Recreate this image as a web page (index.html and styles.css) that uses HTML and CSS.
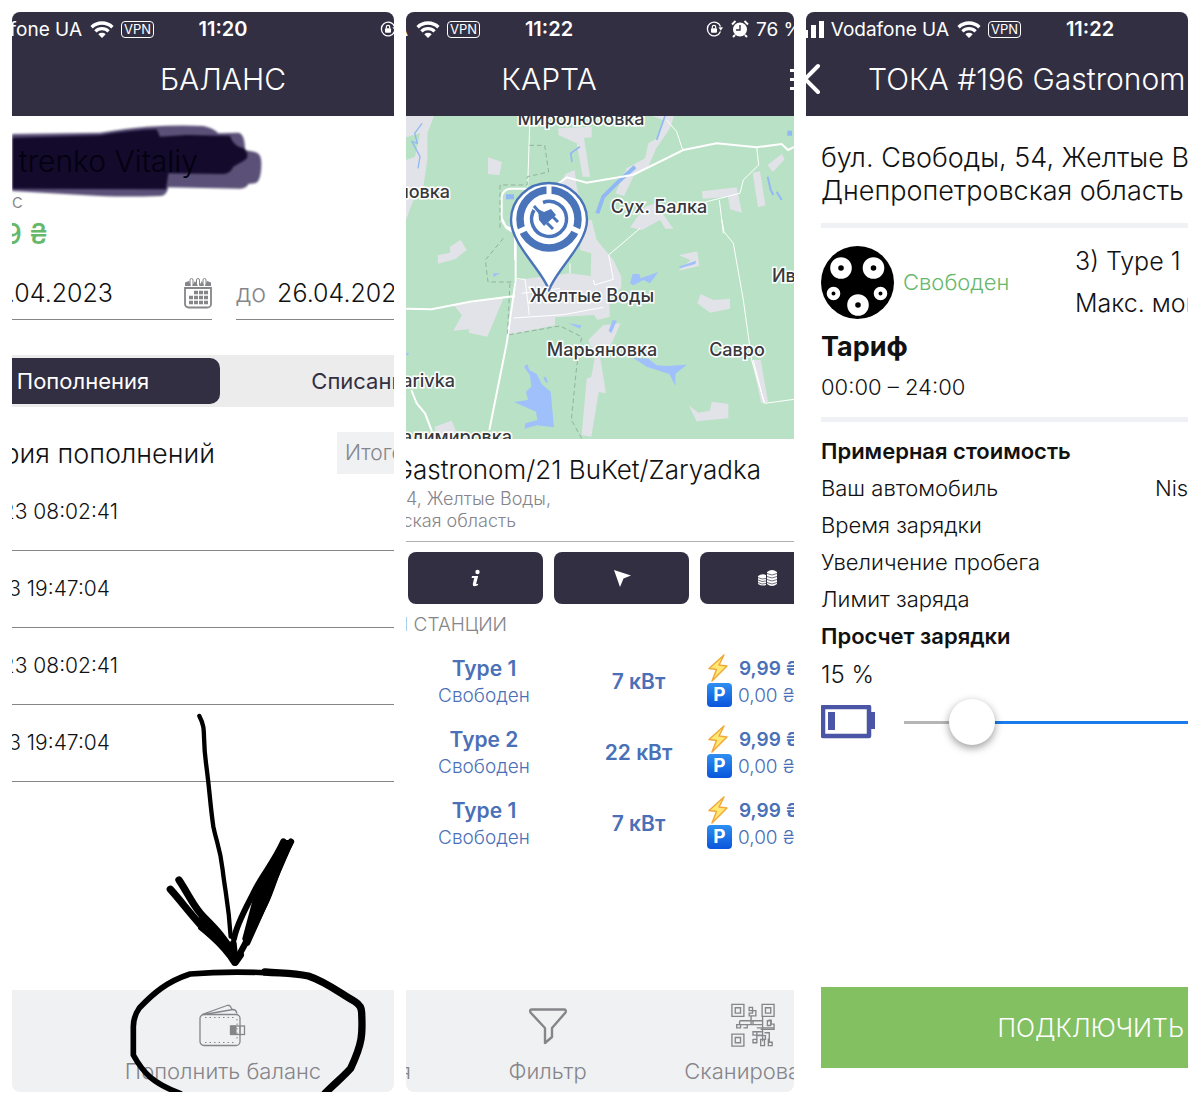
FILE: index.html
```html
<!DOCTYPE html>
<html lang="ru">
<head>
<meta charset="utf-8">
<meta name="viewport" content="width=device-width, initial-scale=1">
<title>TOKA</title>
<link rel="stylesheet" href="styles.css">
</head>
<body>
<svg class="defs" aria-hidden="true">
  <symbol id="wifi" viewBox="0 0 24 17">
    <path d="M1.600 6.200A15 15 0 0 1 22.400 6.200" fill="none" stroke="currentColor" stroke-width="3.400"/>
    <path d="M5.400 10.300A9.500 9.500 0 0 1 18.600 10.300" fill="none" stroke="currentColor" stroke-width="3.200"/>
    <path d="M12 17L8.300 13.300A5.400 5.400 0 0 1 15.700 13.300Z" fill="currentColor"/>
  </symbol>
  <symbol id="lock" viewBox="0 0 17 16">
    <path d="M14.500 5.500A6.800 6.800 0 1 0 14.500 10.500" fill="none" stroke="currentColor" stroke-width="1.300"/>
    <path d="M12.500 6.200h4.500l-2.200 3.600z" fill="currentColor"/>
    <rect x="5" y="7.200" width="6" height="4.600" rx="1" fill="currentColor"/>
    <path d="M6.300 7.500V6a1.700 1.700 0 0 1 3.400 0v1.500" fill="none" stroke="currentColor" stroke-width="1.200"/>
  </symbol>
  <symbol id="bolt" viewBox="0 0 22 28">
    <path d="M17 1L2 14.500l7.500 1L5 27 20 12l-8-1z" fill="#ffe873" stroke="#f2a93b" stroke-width="1.500" stroke-linejoin="round"/>
  </symbol>
</svg>
<main class="gallery">

  <section class="screen screen-balance">
    <header class="top">
      <div class="status">
        <span class="cut carrier">fone UA</span>
        <svg class="wifi"><use href="#wifi"/></svg>
        <span class="vpn">VPN</span>
        <time class="clock">11:20</time>
        <svg class="lock"><use href="#lock"/></svg>
      </div>
      <h1 class="title">БАЛАНС</h1>
    </header>
    <div class="person">
      <svg class="smear" viewBox="0 0 270 84" aria-hidden="true">
        <g transform="translate(-12 -116) scale(.33333)">
          <path d="M20 402L300 398Q380 385 440 380 540 374 610 378 640 384 655 400L715 398Q735 402 735 450L765 456Q785 460 784 490 784 545 765 550L745 552Q740 565 720 566L505 562Q500 588 480 588 350 592 260 586L20 572Z" fill="#3e3260" opacity=".85"/>
          <path d="M20 414L300 406Q400 390 470 388L480 410 560 405 690 408Q700 440 735 446 750 470 735 480L700 500Q690 522 670 522L505 520 498 568 20 566Z" fill="#130a2c"/>
        </g>
      </svg>
      <span class="cut name">trenko Vitaliy</span>
      <span class="cut caption">нс</span>
      <strong class="cut amount">99 ₴</strong>
    </div>
    <div class="dates">
      <div class="date date-from">
        <span class="cut"><input class="date-input" type="text" value=".04.2023" aria-label="от"></span>
        <svg class="calendar" viewBox="0 0 28 32" aria-hidden="true">
          <path d="M1 11h26v16a3.500 3.500 0 0 1-3.500 3.500h-19A3.500 3.500 0 0 1 1 27z" fill="none" stroke="#85858a" stroke-width="1.800"/>
          <path d="M1 9V5.500L5 4l2 5zM8 9l3-5 3 5zM15 9l3-5 2 5zM21 9l2-5 4 1.500V9z" fill="#85858a"/>
          <path d="M6 8V3a1.500 1.500 0 0 1 3 0v5M12.500 8V3a1.500 1.500 0 0 1 3 0v5M19 8V3a1.500 1.500 0 0 1 3 0v5" fill="none" stroke="#85858a"/>
          <path d="M10 15.500h14M5 20.500h19M5 25.500h19" stroke="#85858a" stroke-width="3.600" stroke-dasharray="4 1"/>
        </svg>
      </div>
      <div class="date date-to">
        <label for="to">до</label>
        <input class="date-input" id="to" type="text" value="26.04.2023">
      </div>
    </div>
    <div class="tabs">
      <button class="tab tab-on" type="button">Пополнения</button>
      <button class="tab" type="button">Списания</button>
    </div>
    <div class="history">
      <h2 class="cut history-title">рия пополнений</h2>
      <span class="total">Итого</span>
    </div>
    <ul class="records">
      <li><span class="cut record-long">23 08:02:41</span></li>
      <li><span class="cut record-short">3 19:47:04</span></li>
      <li><span class="cut record-long">23 08:02:41</span></li>
      <li><span class="cut record-short">3 19:47:04</span></li>
    </ul>
    <footer class="bar">
      <a class="bar-item bar-wallet" href="#topup">
        <svg viewBox="0 0 48 44" aria-hidden="true" fill="none" stroke="#85858a">
          <path d="M5 10.500h32a4 4 0 0 1 4 4v23a4 4 0 0 1-4 4H5a4 4 0 0 1-4-4v-23a4 4 0 0 1 4-4z" stroke-width="1.300"/>
          <path d="M3 10.500L28 1.500q3-1 4 2l1 2M5 10.500L34 5.500q3 0 4 4" stroke-width="1.300"/>
          <path d="M6 13.500h31M6 38.500h31M38 15v22" stroke-dasharray="1.500 3"/>
          <rect x="31.500" y="22" width="14" height="8.500" stroke-width="1.300"/>
          <path d="M32 22h5v8.500h-5z" fill="#85858a"/><path d="M41 22v8.500"/>
        </svg>
        Пополнить баланс
      </a>
    </footer>
    <svg class="sketch" viewBox="0 0 382 392" aria-hidden="true">
      <g transform="translate(-12 0) scale(.33333)" fill="none" stroke="#000" stroke-linecap="round" stroke-linejoin="round">
        <path d="M598 48C620 90 606 100 618 190S630 310 640 380C650 430 660 440 668 510S686 610 692 710" stroke-width="13"/>
        <path d="M511 568C540 600 570 640 602 675S670 730 704 786" stroke-width="22"/>
        <path d="M537 540C570 590 580 620 612 652S680 720 705 775" stroke-width="22"/>
        <path d="M602 654L640 686 690 735 704 784 680 748 600 684Z" fill="#000" stroke-width="12"/>
        <path d="M850 424C820 490 790 520 765 570S710 670 702 716" stroke-width="18"/>
        <path d="M873 425C830 500 820 560 795 610S740 730 708 780" stroke-width="19"/>
        <path d="M852 428L870 430 822 540 795 610 742 728 736 716 766 604 795 535Z" fill="#000" stroke-width="18"/>
        <path d="M700 730L706 788 722 765" stroke-width="20"/>
        <path d="M795 818C700 814 640 816 570 822C500 845 460 880 418 924Q400 950 400 980V1065C430 1120 460 1150 540 1180" stroke-width="17"/>
        <path d="M795 816C850 820 880 818 925 828C980 846 1020 880 1065 905Q1086 918 1085 940C1088 1000 1088 1030 1052 1105C1030 1130 1010 1145 975 1180" stroke-width="22"/>
      </g>
    </svg>
  </section>

  <section class="screen screen-map">
    <header class="top">
      <div class="status">
        <span class="cut carrier">UA</span>
        <svg class="wifi"><use href="#wifi"/></svg>
        <span class="vpn">VPN</span>
        <time class="clock">11:22</time>
        <svg class="lock"><use href="#lock"/></svg>
        <svg class="alarm" viewBox="0 0 18 18" aria-hidden="true">
          <circle cx="9" cy="9.500" r="7" fill="#fff"/><path d="M9 5v5H5" fill="none" stroke="#322f42" stroke-width="1.400"/>
          <path d="M1 4.500L4.500 1M13.500 1L17 4.500M4 15l-2 2M14 15l2 2" stroke="#fff" stroke-width="2"/>
        </svg>
        <span>76 %</span>
      </div>
      <div class="heading">
        <h1 class="title">КАРТА</h1>
        <button class="menu" type="button" aria-label="Меню"><i></i><i></i><i></i></button>
      </div>
    </header>
    <svg class="map" viewBox="0 0 388 323" preserveAspectRatio="xMidYMid slice" role="img" aria-label="Карта">
      <rect width="388" height="323" fill="#b9e1c5"/>
      <g transform="translate(-6 -116) scale(.33333)">
        <path d="M18 348H102L82 400V480L70 560 40 600 18 660V480L45 470 60 400 18 412ZM264 472L306 486 298 526 264 522ZM475 385L575 380 575 412 552 414 570 530 548 530 530 430 475 405ZM480 560L496 522 524 510 530 560 570 700H480ZM757 348H822L810 385 768 446 745 500 705 520 672 588 646 580 680 505 735 475 745 430 772 415 790 360ZM1103 495L1145 462 1154 478 1118 516ZM1058 518L1080 514 1096 616 1074 622ZM906 574L1010 562 1026 638 990 628 984 590 908 596ZM690 682L735 620 766 610 820 686 796 686 780 660 726 690Z" fill="#e2e3e8"/>
        <g fill="none" stroke="#91b8f4">
          <path d="M66 370L44 400 52 430 36 425 60 470 54 505" stroke-width="4"/>
          <path d="M795 348L770 420M540 440L512 460 516 486" stroke-width="5"/>
          <path d="M705 500L650 550 610 590 592 640" stroke-width="12"/>
          <path d="M1103 530L1112 570 1120 585M1130 575L1145 600" stroke-width="6"/>
          <path d="M1162 400h14M318 590h24" stroke-width="15"/>
        </g>
        <g fill="none" stroke="#fff">
          <path d="M390 348L383 560M800 360L830 395 848 450M1070 440L1076 495 1030 540 1020 580 916 606M958 600L970 700" stroke-width="3"/>
          <path d="M345 780V690L318 680 305 655V590Q310 566 335 566H455L500 532 560 548 700 524 850 450 950 430 1070 442 1145 432 1164 450 1185 440" stroke-width="6"/>
        </g>
        <path d="M388 436H434L446 516 382 530V555H300V690" fill="none" stroke="#7b9c86" stroke-width="2" stroke-dasharray="14 9"/>
      </g>
      <g transform="translate(-6 104) scale(.33333)">
        <path d="M113 106L150 98V80L182 60 200 90 165 118 114 131ZM160 254L310 236 262 350 206 338 208 328 160 332 186 285ZM350 180L510 160 572 168 574 100 540 90 548 0H575L590 60 640 120 664 170V205L626 235 630 290 592 300 582 285 465 292V316L322 345ZM836 106L892 94 898 138 836 152 872 120ZM892 250L902 222 940 240 990 236V266L930 278ZM565 360L610 315 662 310 635 370 600 410 618 520 596 516 574 650 545 645 560 476 574 470 585 410ZM104 620L155 602 170 638 210 660 110 656ZM866 556L895 578 930 572 935 545 985 552V595L890 604ZM1055 420H1082L1104 545 1084 550Z" fill="#e2e3e8"/>
        <path d="M372 440L382 432 388 450 410 462 425 492 452 515 462 622 410 616 374 626 376 610 412 600 408 575 342 546 384 540 378 515 394 500 390 466ZM690 190L698 162 718 162 722 175 775 156 750 190 730 180 700 196ZM700 414L745 416 770 436 800 438 860 434 826 462V498L808 462 740 440ZM836 140L888 122 886 132 842 144ZM505 310L544 316 540 326ZM638 300L650 302 634 340 626 332ZM430 472L438 470 444 490 436 486ZM280 160L300 160 280 172ZM18 398L28 400 20 408Z" fill="#9fc0fb"/>
        <g fill="none" stroke="#fff">
          <path d="M350 176L375 178 388 285M510 130V160M580 180L584 195 640 178 626 105 720 25M365 220L480 205M340 294L490 284 610 262M966 0L972 35 1000 70 1030 240 1055 420 1094 550 1182 538M1060 420L1092 548" stroke-width="3"/>
          <path d="M18 266L95 268 210 245 345 228M305 0L320 25 347 40V180L320 370 268 630M34 510L50 550 75 580 96 635" stroke-width="6"/>
        </g>
        <path d="M310 55L256 120 264 186H345M330 190L322 345 480 318 545 350 530 440 514 600 545 655" fill="none" stroke="#7b9c86" stroke-width="2" stroke-dasharray="14 9"/>
      </g>
      <g transform="translate(104 66)">
        <path d="M39 108C32 88 1 62 1 38A38 37 0 0 1 77 38C77 62 46 88 39 108Z" fill="#fff" stroke="#4a74ba" stroke-width="2.400"/>
        <circle cx="39" cy="37" r="29" fill="none" stroke="#4a74ba" stroke-width="7.500"/>
        <path d="M39 3V14M8 50L21 44M70 50L57 44" stroke="#fff" stroke-width="5"/>
        <path d="M33 20.500A17.500 17.500 0 1 1 24 28" fill="none" stroke="#4a74ba" stroke-width="3.500"/>
        <path d="M24 24L31 32M42 34L48 40M37 41L43 47" stroke="#4a74ba" stroke-width="3"/>
        <path d="M28 27L34 30 41 27 46 33 34 44 29 38Z" fill="#4a74ba"/>
      </g>
      <g class="map-labels">
        <text x="175" y="9" text-anchor="middle">Миролюбовка</text>
        <text x="44" y="82" text-anchor="end">ловка</text>
        <text x="253" y="97" text-anchor="middle">Сух. Балка</text>
        <text x="366" y="166">Ивановка</text>
        <text x="186" y="186" text-anchor="middle">Желтые Воды</text>
        <text x="196" y="240" text-anchor="middle">Марьяновка</text>
        <text x="331" y="240" text-anchor="middle">Савро</text>
        <text x="49" y="271" text-anchor="end">arivka</text>
        <text x="106" y="327" text-anchor="end">адимировка</text>
      </g>
    </svg>
    <div class="station">
      <h2 class="cut station-name">Gastronom/21 BuKet/Zaryadka</h2>
      <p class="cut station-street">4, Желтые Воды,</p>
      <p class="cut station-region">ская область</p>
    </div>
    <div class="actions">
      <button class="action" type="button" aria-label="Информация">
        <svg viewBox="0 0 20 20" fill="#fff"><circle cx="11.500" cy="4" r="2.200"/><path d="M6 8h6.200l-2 7.500q0 1 2 .2l-.4 1.600q-5.500 2.400-5-1.300l1.400-6H5.600z"/></svg>
      </button>
      <button class="action" type="button" aria-label="Маршрут">
        <svg viewBox="0 0 20 20" fill="#fff"><path d="M2 2L19 7.500 11.500 10.500 8 19Z"/></svg>
      </button>
      <button class="action" type="button" aria-label="Оплата">
        <svg viewBox="0 0 20 20"><path d="M9 4q5-4 10 0v12q-5 4-10 0zM0 8q4-3 8-1v10q-4 1.500-8-1z" fill="#fff"/><path d="M9 5.500q5 3 10 0M9 8.500q5 3 10 0M9 11.500q5 3 10 0M9 14.500q5 3 10 0M0 9.500q4 2.500 8 1M0 12q4 2.500 8 1M0 14.500q4 2.500 8 1" fill="none" stroke="#322f42" stroke-width=".7"/></svg>
      </button>
    </div>
    <p class="cut ports-title">Й СТАНЦИИ</p>
    <table class="ports">
      <tbody>
        <tr>
          <td class="port"><b>Type 1</b><span>Свободен</span></td>
          <td class="power">7 кВт</td>
          <td class="price"><div><svg><use href="#bolt"/></svg><b>9,99 ₴</b></div><div><i>P</i><span>0,00 ₴</span></div></td>
        </tr>
        <tr>
          <td class="port"><b>Type 2</b><span>Свободен</span></td>
          <td class="power">22 кВт</td>
          <td class="price"><div><svg><use href="#bolt"/></svg><b>9,99 ₴</b></div><div><i>P</i><span>0,00 ₴</span></div></td>
        </tr>
        <tr>
          <td class="port"><b>Type 1</b><span>Свободен</span></td>
          <td class="power">7 кВт</td>
          <td class="price"><div><svg><use href="#bolt"/></svg><b>9,99 ₴</b></div><div><i>P</i><span>0,00 ₴</span></div></td>
        </tr>
      </tbody>
    </table>
    <footer class="bar bar-map">
      <a class="bar-item bar-edge" href="#list"><span class="cut">я</span></a>
      <a class="bar-item" href="#filter">
        <svg viewBox="0 0 48 44" aria-hidden="true" fill="none" stroke="#85858a" stroke-width="2.400" stroke-linejoin="round"><path d="M7.500 5.500H40q2.500 0 1.500 3L28 24v9l-7 6V24L6.500 8.500q-1-3 1-3z"/></svg>
        Фильтр
      </a>
      <a class="bar-item" href="#scan">
        <svg viewBox="0 0 48 48" aria-hidden="true" fill="none" stroke="#85858a" stroke-width="1.400">
          <path d="M2 1.500h12.500V14H2zM5.500 5h5.500v5.500H5.500zM33.500 1.500H46V14H33.500zM37 5h5.500v5.500H37zM2 32.500h12.500V45H2zM5.500 36h5.500v5.500H5.500z"/>
          <path d="M20 4.500h3.500V8H20zM23.500 8H27v5.500h-7V10.500h3.500zM10 18.500h14v4H10v-4M7 22.500h4v3.500H7zM14 26h4v-3.500M22 14v9M24 18.500h10V40M22 22.500h12M34 18.500v-4M40 18h3v4h3v5.500H32M39 18.500h3.500v5H39zM28 26h18M24 30h10v3.500H24zM24 38h4v3.500h-4v-4M28 30v11M28 34h9v4h-5v6.500h4V37M36 31h5v10h3v3.500h-4V37"/>
        </svg>
        Сканировать
      </a>
    </footer>
  </section>

  <section class="screen screen-charge">
    <header class="top">
      <div class="status">
        <span class="cut carrier">
          <svg class="signal" viewBox="0 0 20 18" aria-hidden="true"><path d="M0 10h4v8H0zM7 5h5v13H7zM15 1h5v17h-5z" fill="#fff"/></svg>
          Vodafone UA
        </span>
        <svg class="wifi"><use href="#wifi"/></svg>
        <span class="vpn">VPN</span>
        <time class="clock">11:22</time>
      </div>
      <div class="heading">
        <button class="back" type="button" aria-label="Назад"><svg viewBox="0 0 16 32"><path d="M12 3L-1 16 12 29" fill="none" stroke="#fff" stroke-width="4" stroke-linecap="round"/></svg></button>
        <h1 class="title">ТОКА #196 Gastronom</h1>
      </div>
    </header>
    <div class="details">
      <p class="address">бул. Свободы, 54, Желтые Воды,<br>Днепропетровская область</p>
      <div class="connector">
        <svg class="plug" viewBox="0 0 73 73" aria-hidden="true">
          <circle cx="36.500" cy="36.500" r="36.500"/>
          <g fill="none" stroke="#fff">
            <circle cx="20" cy="22" r="6.800" stroke-width="8"/><circle cx="52.500" cy="22" r="6.800" stroke-width="8"/>
            <circle cx="37" cy="59" r="6.800" stroke-width="8"/>
            <circle cx="12.500" cy="47.500" r="4.400" stroke-width="4.800"/><circle cx="59.500" cy="47.500" r="4.400" stroke-width="4.800"/>
          </g>
        </svg>
        <span class="free">Свободен</span>
        <p class="kind">3) Type 1<br>Макс. мощность</p>
      </div>
      <h2 class="tariff">Тариф</h2>
      <p class="hours">00:00 – 24:00</p>
      <dl class="estimate">
        <dt class="strong">Примерная стоимость</dt>
        <div><dt>Ваш автомобиль</dt><dd>Nissan</dd></div>
        <dt>Время зарядки</dt>
        <dt>Увеличение пробега</dt>
        <dt>Лимит заряда</dt>
        <dt class="strong"><label for="charge">Просчет зарядки</label></dt>
      </dl>
      <output class="percent" for="charge">15 %</output>
      <div class="level">
        <svg class="battery" viewBox="0 0 54 34" aria-hidden="true"><path d="M2 2H48V31H2z" fill="#fff" stroke="#4a56a5" stroke-width="4.500" stroke-linejoin="round"/><path d="M50 7h4v17h-4zM7 7h7v18H7z" fill="#4a56a5"/></svg>
        <input class="slider" id="charge" type="range" min="0" max="100" value="19">
      </div>
    </div>
    <button class="connect" type="button">ПОДКЛЮЧИТЬ</button>
  </section>

</main>
</body>
</html>
```
FILE: styles.css
```css
* { box-sizing: border-box; }

body {
  margin: 0;
  background: #fff;
  color: #111;
  font-family: Inter, "Open Sans", sans-serif;
  font-size: 22px;
  font-weight: 300;
}

h1, h2, p, ul, dl, dd { margin: 0; padding: 0; }
h1, h2 { font-weight: 300; }
button, input { font: inherit; border: 0; padding: 0; background: none; color: inherit; }
a { color: inherit; text-decoration: none; }
i { font-style: normal; }
.defs { position: absolute; width: 0; height: 0; }

.gallery {
  display: grid;
  grid-template-columns: 382fr 388fr 382fr;
  gap: 12px;
  min-height: 100vh;
  padding: 12px;
}

.screen {
  position: relative;
  display: flex;
  flex-direction: column;
  min-width: 0;
  overflow: hidden;
  border-radius: 8px;
  white-space: nowrap;
}
.screen-balance { --axis: 422px; --carrier: 70px; }
.screen-map { --axis: 286px; --carrier: 2px; }
.screen-charge { --carrier: 143px; }

/* Text that runs off the left edge of its screen */
.cut { display: flex; justify-content: flex-end; }

/* Header */
.top { height: 104px; background: #322f42; color: #fff; }
.status { display: flex; align-items: center; height: 34px; font-size: 19px; font-weight: 400; }
.status svg { flex: none; }
.carrier { flex: none; align-items: center; width: var(--carrier); }
.signal { width: 20px; height: 18px; margin-right: 7px; }
.wifi { width: 24px; height: 17px; margin: 0 7px 0 8px; }
.vpn {
  flex: none;
  width: 33px;
  height: 17px;
  border: 1px solid #fff;
  border-radius: 4px;
  font-size: 13px;
  line-height: 15px;
  text-align: center;
}
.clock { flex: none; width: 50px; margin-left: 44px; font-size: 20px; font-weight: 600; text-align: center; }
.lock { width: 17px; height: 16px; margin-left: 132px; }
.alarm { width: 18px; height: 18px; margin: 0 7px 0 8px; }
.title { width: var(--axis, auto); flex: none; font-size: 30px; line-height: 66px; text-align: center; }
.heading { display: flex; align-items: center; }
.menu { display: grid; gap: 6px; width: 24px; margin-left: auto; margin-right: -20px; }
.menu i { height: 3px; background: #fff; }
.back { flex: none; width: 62px; height: 32px; }
.back svg { display: block; width: 16px; height: 32px; }

/* Balance */
.person { position: relative; height: 139px; padding-top: 24px; }
.smear { position: absolute; top: 0; left: 0; width: 270px; height: 84px; filter: blur(1px); }
.name { position: relative; width: 186px; color: #04010f; font-size: 30px; line-height: 42px; }
.caption { width: 11px; color: #85858a; font-size: 20px; line-height: 38px; }
.amount { width: 36px; color: #66b86a; font-size: 28px; font-weight: 500; line-height: 28px; }
.dates { display: flex; gap: 24px; }
.date { display: flex; align-items: center; height: 65px; padding-top: 11px; border-bottom: 1px solid #85858a; }
.date-from { flex: 0 0 200px; justify-content: space-between; }
.date-from .cut { width: 101px; }
.date-from .date-input { text-align: right; }
.date-to { flex: 1; min-width: 0; gap: 11px; color: #85858a; font-size: 25px; }
.date-input { flex: none; width: 150px; color: #111; font-size: 25px; }
.calendar { width: 28px; height: 32px; }
.tabs { display: flex; height: 52px; margin-top: 35px; padding: 3px 0; background: #ececed; }
.tab { flex: none; width: 288px; color: #322f42; font-weight: 400; }
.tab-on { width: 208px; padding-right: 66px; border-radius: 0 10px 10px 0; background: #322f42; color: #fff; }
.history { display: flex; align-items: center; justify-content: space-between; margin-top: 25px; }
.history-title { width: 203px; font-size: 27px; }
.total { width: 57px; padding-left: 8px; background: #f0f1f3; color: #85858a; font-size: 21px; line-height: 42px; }
.records { list-style: none; font-size: 21px; }
.records li { height: 77px; border-bottom: 1px solid #85858a; line-height: 76px; }
.record-long { width: 106px; }
.record-short { width: 98px; }

/* Bottom bar */
.bar { display: flex; height: 102px; margin-top: auto; background: #f0f1f3; color: #85858a; }
.bar-item { display: flex; flex-direction: column; align-items: center; justify-content: space-between; padding: 13px 0 7px; line-height: 28px; }
.bar-item svg { width: 48px; height: 46px; }
.bar-wallet { flex: none; width: var(--axis); }
.bar-map { display: grid; grid-template-columns: 10% 53% 53%; }
.bar-edge { align-items: flex-start; justify-content: flex-end; }
.bar-edge .cut { width: 5px; }

.sketch { position: absolute; left: 0; bottom: 0; width: 382px; height: 392px; pointer-events: none; }

/* Map */
.map { display: block; width: 100%; height: 323px; }
.map-labels { fill: #36383c; stroke: #fff; stroke-width: 3px; paint-order: stroke; font-size: 18px; font-weight: 500; }
.station { padding: 13px 0 9px; border-bottom: 1px solid #b0b0b4; color: #85858a; font-size: 18px; line-height: 22px; }
.station-name { width: 355px; color: #111; font-size: 26px; line-height: 36px; }
.station-street { width: 145px; }
.station-region { width: 110px; }
.actions { display: grid; grid-template-columns: repeat(3, 35%); gap: 11px; padding: 10px 0 0 2px; }
.action { height: 52px; border-radius: 8px; background: #322f42; }
.action svg { display: block; width: 20px; height: 20px; margin: auto; }
.ports-title { width: 101px; color: #85858a; font-size: 19px; line-height: 42px; }
.ports { width: 100%; table-layout: fixed; border-collapse: collapse; color: #4a70b8; font-size: 21px; text-align: center; }
.ports td { height: 71px; padding: 0; }
.ports b, .power { font-weight: 600; }
.port { width: 156px; }
.port b, .port span { display: block; line-height: 27px; }
.port span { font-size: 19px; }
.ports .power { width: 145px; padding-left: 8px; }
.price div { display: flex; align-items: center; gap: 6px; height: 27px; font-size: 19px; }
.price svg { flex: none; width: 22px; height: 28px; margin-right: 4px; }
.price i {
  flex: none;
  width: 25px;
  height: 24px;
  border-radius: 4px;
  background: linear-gradient(#2f8ff0, #0a55dc);
  color: #fff;
  font-weight: 700;
  line-height: 24px;
}

/* Charging */
.details { padding: 25px 0 0 15px; }
.address { padding-bottom: 16px; border-bottom: 5px solid #f0f1f5; font-size: 27px; line-height: 33px; }
.connector { display: flex; align-items: center; margin-top: 12px; }
.plug { flex: none; width: 73px; height: 73px; margin-right: 9px; }
.free { flex: none; width: 172px; color: #66b86a; }
.kind { font-size: 25px; line-height: 42px; }
.tariff { margin-top: 4px; font-size: 27px; font-weight: 700; line-height: 38px; }
.hours { padding-bottom: 9px; border-bottom: 5px solid #f0f1f5; line-height: 42px; }
.estimate { padding-top: 11px; line-height: 37px; }
.estimate div { display: flex; justify-content: space-between; }
.estimate dd { width: 33px; }
.strong { font-weight: 600; }
.percent { display: block; font-size: 24px; line-height: 40px; }
.level { display: flex; align-items: center; gap: 29px; margin-top: 4px; }
.battery { flex: none; width: 54px; height: 34px; }
.slider { flex: 1; min-width: 0; height: 46px; margin: 0; appearance: none; }
.slider::-webkit-slider-runnable-track { height: 3px; background: linear-gradient(90deg, #b5b5b5 24%, #1a7bea 24%); }
.slider::-webkit-slider-thumb {
  width: 46px;
  height: 46px;
  margin-top: -22px;
  appearance: none;
  border-radius: 50%;
  background: #fff;
  box-shadow: 0 3px 8px #0006;
}
.connect {
  height: 81px;
  margin: auto 0 24px 15px;
  padding-right: 4px;
  background: #82c062;
  color: #fff;
  font-size: 25px;
  text-align: right;
}
```
